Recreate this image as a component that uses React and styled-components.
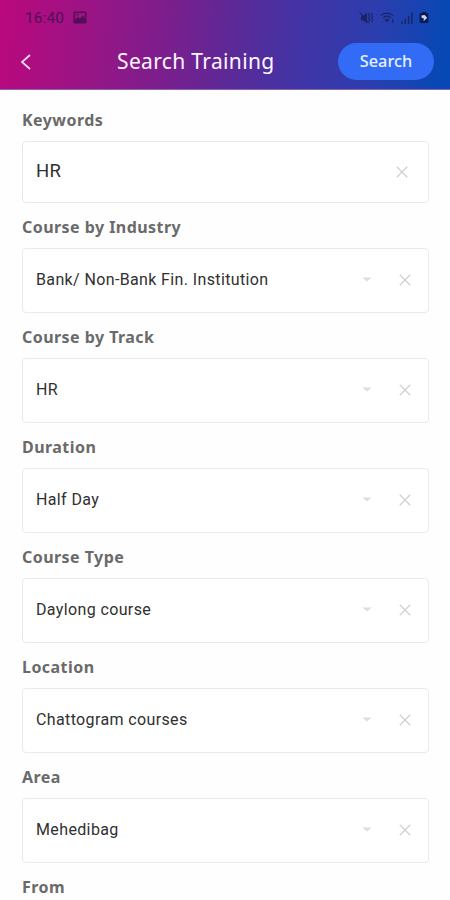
import { useState } from "react";
import styled, { createGlobalStyle } from "styled-components";

const GlobalStyle = createGlobalStyle`
  * {
    box-sizing: border-box;
  }
  body {
    margin: 0;
    background: #fefefe;
    overflow: hidden;
  }
`;

const Screen = styled.div`
  display: flex;
  flex-direction: column;
  width: 450px;
  height: 900px;
  overflow: hidden;
  background: #fefefe;
`;

const Header = styled.header`
  flex: none;
  height: 90px;
  border-bottom: 1px solid #8a62b4;
  background: linear-gradient(
    97deg,
    #ba087c 0%,
    #9a1485 20%,
    #7c1e8d 37%,
    #5b2a98 52%,
    #4034a6 67%,
    #2b3eae 83%,
    #0848b4 97%
  );
`;

const StatusBar = styled.div`
  display: flex;
  align-items: center;
  justify-content: space-between;
  height: 35px;
  padding: 0 21px 0 25px;
`;

const StatusGroup = styled.div`
  display: flex;
  align-items: center;
  gap: ${(props) => props.$gap}px;
  color: ${(props) => props.$color};
`;

const Clock = styled.span`
  font-family: Roboto, sans-serif;
  font-size: 15.5px;
  line-height: 18px;
  letter-spacing: 0.1px;
`;

const NavBar = styled.div`
  display: grid;
  grid-template-columns: 52px 1fr 112px;
  align-items: center;
  height: 53px;
`;

const BackButton = styled.button`
  display: flex;
  margin: 0;
  padding: 0 0 0 19px;
  border: 0;
  background: none;
  color: #f6dcf2;
`;

const Title = styled.h1`
  margin: 0;
  padding: 0 0 1px 65px;
  font-family: "Noto Sans", sans-serif;
  font-size: 21px;
  font-weight: 400;
  line-height: 26px;
  letter-spacing: 0.35px;
  white-space: nowrap;
  color: #fff6ff;
`;

const SearchButton = styled.button`
  width: 96px;
  height: 37px;
  padding: 0 0 1px;
  border: 0;
  border-radius: 19px;
  background: #326cf6;
  color: #e6f0ff;
  font-family: "Noto Sans", sans-serif;
  font-size: 16.3px;
  font-weight: 500;
`;

const Form = styled.main`
  display: flex;
  flex-direction: column;
  gap: 13px;
  padding: 19px 21px 0 22px;
`;

const Field = styled.div`
  display: flex;
  flex-direction: column;
  gap: 10px;
`;

const Label = styled.label`
  height: 22px;
  font-family: "Noto Sans", sans-serif;
  font-size: 16px;
  font-weight: 700;
  line-height: 22px;
  letter-spacing: 0.45px;
  white-space: nowrap;
  color: #6a6a6a;
`;

const Box = styled.div`
  display: flex;
  align-items: center;
  height: ${(props) => (props.$select ? 65 : 62)}px;
  padding: 0 ${(props) => (props.$select ? 17 : 20)}px 2px 13px;
  border: 1.5px solid #eaeaea;
  border-radius: 4px;
  background: #fff;
`;

const Value = styled.span`
  flex: 1;
  font-family: Roboto, sans-serif;
  font-size: ${(props) => (props.$large ? 18.5 : 16)}px;
  line-height: 22px;
  letter-spacing: ${(props) => (props.$large ? 0.2 : 0.37)}px;
  white-space: nowrap;
  color: #303030;
`;

const IconButton = styled.button`
  display: flex;
  margin: ${(props) => props.$margin || "0"};
  padding: 0;
  border: 0;
  background: none;
`;

const PictureIcon = () => (
  <svg width="14" height="13" viewBox="0 0 14 13">
    <path
      fill="currentColor"
      fillRule="evenodd"
      d="M1.5 0.5h11a1 1 0 0 1 1 1v10a1 1 0 0 1-1 1h-11a1 1 0 0 1-1-1v-10a1 1 0 0 1 1-1zM2 2v6.6l2.8-2.8 2 2 3-3.2L12 7V2zM3.4 3h2v1.6h-2z"
    />
  </svg>
);

const MuteIcon = () => (
  <svg width="15" height="14" viewBox="0 0 15 14">
    <path fill="currentColor" d="M2 4.5h2.5L8 1.5v11L4.5 9.5H2z" />
    <path
      fill="none"
      stroke="currentColor"
      strokeWidth="1.1"
      d="M0.5 1l9 11M10.5 2l-1 1.8 1.2 1.8-1.2 1.8 1.2 1.8-1 2M13.5 2l-1 1.8 1.2 1.8-1.2 1.8 1.2 1.8-1 2"
    />
  </svg>
);

const WifiIcon = () => (
  <svg width="15" height="13" viewBox="0 0 15 13">
    <g fill="none" stroke="currentColor" strokeWidth="1.2">
      <path d="M0.8 4.6c3.6-3.4 8.8-3.4 12.4 0" />
      <path d="M3 7c2.4-2.2 5.6-2.2 8 0" />
      <path d="M12.8 8v4" />
    </g>
    <path fill="currentColor" d="M4.6 8.6c1.5-1.2 3.3-1.2 4.8 0L7 11.4z" />
  </svg>
);

const SignalIcon = () => (
  <svg width="12" height="12" viewBox="0 0 12 12">
    <path
      fill="none"
      stroke="currentColor"
      strokeWidth="1.5"
      d="M1 12V9.5M4.3 12V7M7.6 12V4M10.9 12V0.5"
    />
  </svg>
);

const BatteryIcon = () => (
  <svg width="10" height="13" viewBox="0 0 10 13">
    <path
      fill="#0c1a50"
      d="M3 1h4v1h1a1.4 1.4 0 0 1 1.4 1.4v7.2A1.4 1.4 0 0 1 8 12H2a1.4 1.4 0 0 1-1.4-1.4V3.4A1.4 1.4 0 0 1 2 2h1z"
    />
    <path fill="#c3d6fa" d="M2.4 4.5L5.6 4l2.6 2.8-3.6 3.4.3-2.6-2.3-.8z" />
  </svg>
);

const ChevronIcon = () => (
  <svg width="13" height="18" viewBox="0 0 13 18">
    <path
      fill="none"
      stroke="currentColor"
      strokeWidth="1.7"
      d="M11 2L3 9l8 7"
    />
  </svg>
);

const ClearIcon = () => (
  <svg width="12" height="12" viewBox="0 0 12 12">
    <path
      fill="none"
      stroke="#d0d0d0"
      strokeWidth="1.3"
      d="M0.8 0.8l10.4 10.4M11.2 0.8L0.8 11.2"
    />
  </svg>
);

const ArrowIcon = () => (
  <svg width="10" height="5" viewBox="0 0 11 5">
    <path fill="#dedede" d="M0.3 0.3h10.4L5.5 4.8z" />
  </svg>
);

const initialFields = [
  { name: "keywords", label: "Keywords", value: "HR" },
  {
    name: "industry",
    label: "Course by Industry",
    value: "Bank/ Non-Bank Fin. Institution",
    select: true,
  },
  { name: "track", label: "Course by Track", value: "HR", select: true },
  { name: "duration", label: "Duration", value: "Half Day", select: true },
  { name: "type", label: "Course Type", value: "Daylong course", select: true },
  {
    name: "location",
    label: "Location",
    value: "Chattogram courses",
    select: true,
  },
  { name: "area", label: "Area", value: "Mehedibag", select: true },
];

export default function App() {
  const [fields, setFields] = useState(initialFields);

  const handleClear = (name) => {
    setFields(fields.map((e) => (e.name === name ? { ...e, value: "" } : e)));
  };

  return (
    <>
      <GlobalStyle />
      <Screen>
        <Header>
          <StatusBar>
            <StatusGroup $gap={9} $color="#520f58">
              <Clock>16:40</Clock>
              <PictureIcon />
            </StatusGroup>
            <StatusGroup $gap={6} $color="#1b2468">
              <MuteIcon />
              <WifiIcon />
              <SignalIcon />
              <BatteryIcon />
            </StatusGroup>
          </StatusBar>
          <NavBar>
            <BackButton aria-label="Back">
              <ChevronIcon />
            </BackButton>
            <Title>Search Training</Title>
            <SearchButton>Search</SearchButton>
          </NavBar>
        </Header>
        <Form>
          {fields.map((e) => (
            <Field key={e.name}>
              <Label>{e.label}</Label>
              <Box $select={e.select}>
                <Value $large={!e.select}>{e.value}</Value>
                {e.select && (
                  <IconButton $margin="0 27px 0 0" aria-label="Open">
                    <ArrowIcon />
                  </IconButton>
                )}
                <IconButton
                  $margin={e.select ? "0" : "2px 0 0"}
                  aria-label="Clear"
                  onClick={() => handleClear(e.name)}
                >
                  <ClearIcon />
                </IconButton>
              </Box>
            </Field>
          ))}
          <Label>From</Label>
        </Form>
      </Screen>
    </>
  );
}
